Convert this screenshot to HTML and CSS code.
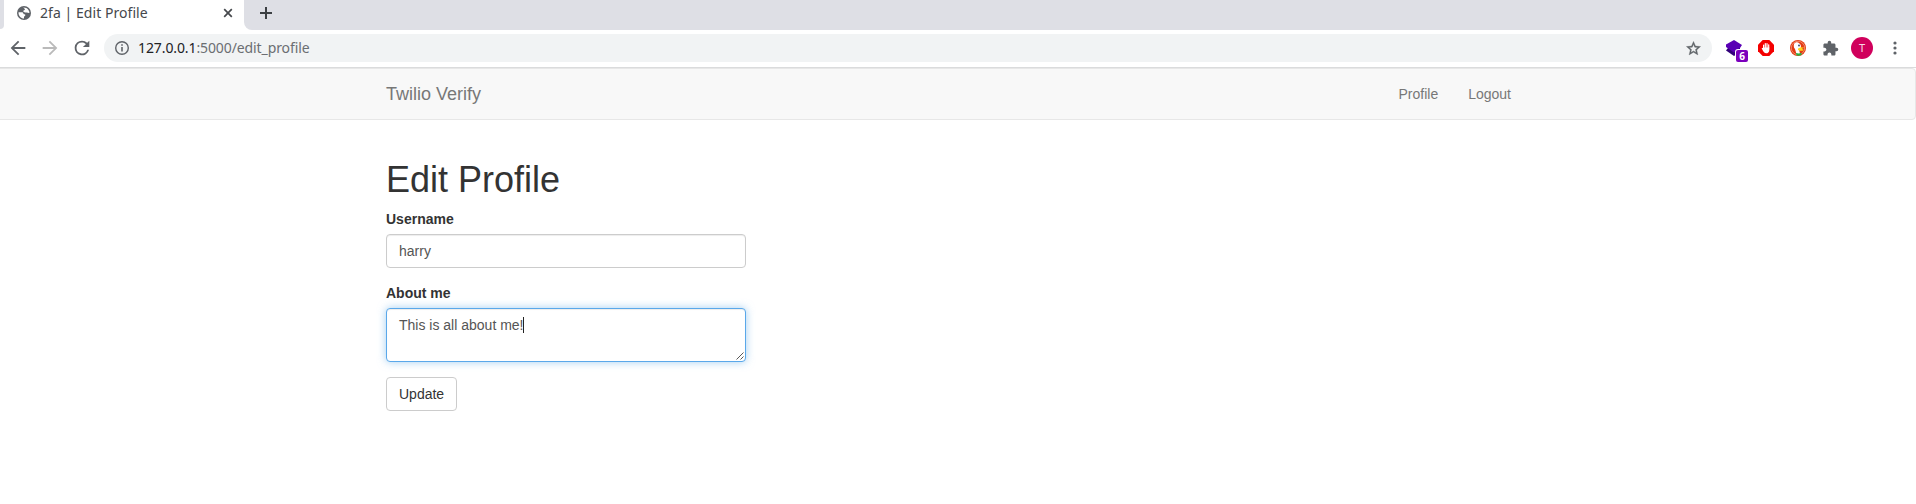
FILE: index.html
```html
<!DOCTYPE html>
<html lang="en">
<head>
<meta charset="utf-8">
<title>2fa | Edit Profile</title>
<link rel="stylesheet" href="styles.css">
</head>
<body>
<div class="browser">
  <div class="tabstrip">
    <div class="prev-tab"></div>
    <div class="tab">
      <svg class="favicon" width="16" height="16" viewBox="0 0 16 16"><circle cx="8" cy="8" r="7" fill="#5f6368"/><path d="M2.500 7.200h3.200c1 0 1.500.5 1.700 1.300.2.700.8.900 1.800.9.300 1-.1 1.800-1.200 2.100V13.500C5 13.300 2.300 11 2.500 7.200zM7.300 2.500c2-.1 4 .8 5 2.300.7 1 1.200 1.900 1.200 3-1.100.3-1.500-.3-2.600-.4-1.200-.1-2 .3-3.100-.4-.8-.6-.6-1.500.3-1.700.9-.2.900-.8.700-1.200z" fill="#fff"/></svg>
      <span class="tab-title">2fa | Edit Profile</span>
      <svg class="tab-close" width="10" height="10" viewBox="0 0 10 10"><path d="M1.200 1.200l7.600 7.600M8.800 1.200L1.200 8.800" stroke="#45484c" stroke-width="1.700"/></svg>
    </div>
    <div class="tab-rest">
      <svg width="14" height="14" viewBox="0 0 14 14"><path d="M7 1v12M1 7h12" stroke="#3c4043" stroke-width="2"/></svg>
    </div>
  </div>
  <div class="toolbar">
    <div class="slot"><svg width="22" height="22" viewBox="0 0 24 24"><path fill="#5f6368" d="M20 11H7.830l5.590-5.590L12 4l-8 8 8 8 1.410-1.410L7.830 13H20z"/></svg></div>
    <div class="slot"><svg width="22" height="22" viewBox="0 0 24 24"><path fill="#bababa" d="M12 4l-1.410 1.410L16.170 11H4v2h12.170l-5.580 5.590L12 20l8-8z"/></svg></div>
    <div class="slot"><svg width="22" height="22" viewBox="0 0 24 24"><path fill="#5f6368" d="M17.650 6.350A7.960 7.960 0 0 0 12 4a8 8 0 1 0 7.730 10h-2.080A6 6 0 1 1 12 6c1.660 0 3.140.69 4.220 1.780L13 11h7V4z"/></svg></div>
    <div class="omnibox">
      <svg width="16" height="16" viewBox="0 0 16 16"><circle cx="8" cy="8" r="6.300" fill="none" stroke="#5f6368" stroke-width="1.400"/><path d="M7.200 7h1.600v4.500H7.200zM7.200 4.300h1.600v1.500H7.200z" fill="#5f6368"/></svg>
      <span class="url"><span class="host">127.0.0.1</span>:5000/edit_profile</span>
      <svg class="star" width="17" height="17" viewBox="0 0 24 24"><path fill="#5f6368" stroke="#5f6368" stroke-width=".5" d="M22 9.240l-7.190-.62L12 2 9.190 8.630 2 9.240l5.460 4.730L5.820 21 12 17.270 18.180 21l-1.630-7.030zM12 15.400l-3.760 2.270 1-4.280-3.320-2.880 4.380-.38L12 6.100l1.710 4.040 4.380.38-3.320 2.880 1 4.280z"/></svg>
    </div>
    <div class="slot slot-badge">
      <svg width="16" height="16" viewBox="0 0 16 16"><path fill="#32007a" d="M2 8L0 10.500 8 16l6-4V7z"/><path fill="#5a00b5" d="M8 0l8 5-2 3-6 4.500L0 7V4.500z"/></svg>
      <span class="badge">6</span>
    </div>
    <div class="slot"><svg width="16" height="16" viewBox="0 0 16 16"><path d="M4.700 0h6.600L16 4.700v6.600L11.300 16H4.700L0 11.300V4.700z" fill="#f40000"/><path d="M5.600 9V5M7.300 8V3.500M9 8V3.500M10.700 8V4.800" stroke="#fff" stroke-width="1.200" stroke-linecap="round"/><path d="M3.600 8.300l1.400-.5 1 .2V7.500h5.300c.4 3.300-.4 5.800-2.800 5.800-2.300 0-3.400-2-4.900-5z" fill="#fff"/></svg></div>
    <div class="slot"><svg width="16" height="16" viewBox="0 0 16 16"><circle cx="8" cy="8" r="8" fill="#e33b12"/><circle cx="8" cy="8" r="6.700" fill="none" stroke="#f8a68c" stroke-width=".7"/><path d="M4 4c1.300-2.200 4-2 5.200-.8 1.800 1.300 2 3.200 1.600 5.200L9.200 10.500l1.200 4.300H6.700L5 9C3.900 8 3.500 6 4 4z" fill="#fff"/><circle cx="9" cy="5.500" r=".9" fill="#24406e"/><path d="M8 8.500l2.800-1.200 3.700.4-2.800 1.100 2.200 1.200c-1.700 1.200-4.700 1-5.900 0z" fill="#ffd51c"/><path d="M6 13l2.800.5 2.700-.8v2.400c-1.500.7-3.800.7-5.100.2z" fill="#28b040"/></svg></div>
    <div class="slot"><svg width="17" height="17" viewBox="0 0 24 24"><path fill="#5f6368" d="M20.500 11H19V7c0-1.100-.9-2-2-2h-4V3.500a2.500 2.500 0 0 0-5 0V5H4c-1.100 0-1.990.9-1.990 2v3.800H3.500c1.490 0 2.700 1.210 2.700 2.700s-1.210 2.700-2.700 2.700H2V20c0 1.100.9 2 2 2h3.800v-1.500c0-1.490 1.210-2.700 2.700-2.700s2.700 1.210 2.700 2.700V22H17c1.100 0 2-.9 2-2v-4h1.500a2.500 2.500 0 0 0 0-5z"/></svg></div>
    <div class="slot"><span class="avatar">T</span></div>
    <div class="slot slot-menu"><svg width="4" height="14" viewBox="0 0 4 14"><g fill="#5f6368"><circle cx="2" cy="2" r="1.600"/><circle cx="2" cy="7" r="1.600"/><circle cx="2" cy="12" r="1.600"/></g></svg></div>
  </div>
</div>
<div class="page">
  <nav class="navbar">
    <div class="container nav-inner">
      <a class="brand">Twilio Verify</a>
      <div class="nav-links"><a>Profile</a><a>Logout</a></div>
    </div>
  </nav>
  <main class="container">
    <h1>Edit Profile</h1>
    <form class="form">
      <div class="form-group">
        <label for="username">Username</label>
        <input id="username" class="form-control" type="text" value="harry">
      </div>
      <div class="form-group">
        <label>About me</label>
        <div class="form-control about">This is all about me!<span class="caret"></span>
          <svg class="grip" width="8" height="8" viewBox="0 0 8 8"><path d="M.5 7.500l7-7M4.500 7.500l3-3" stroke="#444" stroke-width=".9"/></svg>
        </div>
      </div>
      <button class="btn" type="button">Update</button>
    </form>
  </main>
</div>
</body>
</html>
```
FILE: styles.css
```css
* { box-sizing: border-box; }
body {
  margin: 0;
  height: 504px;
  overflow: hidden;
  background: #fff;
  font: 14px/20px "Liberation Sans", Arial, sans-serif;
  color: #333;
}
svg { display: block; flex: none; }

/* Browser chrome */
.browser {
  height: 68px;
  border-bottom: 1px solid #dadbdc;
  font-family: "Noto Sans", sans-serif;
}
.tabstrip { display: flex; height: 30px; background: #fff; }
.prev-tab { width: 4px; height: 29px; background: #dedfe5; border-bottom-right-radius: 4px; }
.tab { width: 240px; display: flex; align-items: center; padding: 0 11px 4px 12px; }
.tab-title {
  margin-left: 8px;
  font-size: 14px;
  letter-spacing: .05px;
  line-height: 20px;
  color: #45484c;
  white-space: nowrap;
}
.tab-close { margin-left: auto; }
.tab-rest {
  flex: 1;
  background: #dedfe5;
  border-bottom-left-radius: 8px;
  padding: 6px 0 0 15px;
}
.toolbar { display: flex; align-items: center; height: 37px; padding: 0 6px 1px 2px; }
.slot { width: 32px; height: 28px; display: flex; align-items: center; justify-content: center; flex: none; }
.slot-menu { padding-left: 1px; }
.omnibox {
  flex: 1;
  height: 28px;
  margin: 0 6px;
  padding: 0 10px;
  border-radius: 14px;
  background: #f1f3f4;
  display: flex;
  align-items: center;
}
.url { margin-left: 8px; font-size: 14px; letter-spacing: -.1px; color: #6b6e72; white-space: nowrap; }
.host { color: #202124; }
.star { margin-left: auto; }
.slot-badge { position: relative; }
.badge {
  position: absolute;
  left: 18px;
  top: 16px;
  width: 12px;
  height: 12px;
  border-radius: 2px;
  background: #7b00bd;
  box-shadow: 0 0 0 1px #fff;
  color: #fff;
  font: bold 10px/12px "Noto Sans", sans-serif;
  text-align: center;
}
.avatar {
  width: 22px;
  height: 22px;
  border-radius: 50%;
  background: #d0005c;
  color: #f8d5e4;
  font-size: 11px;
  line-height: 22px;
  text-align: center;
}

/* Page */
.page { width: 1920px; margin-left: -4px; }
.container { width: 1170px; margin: 0 auto; padding: 0 15px; }
.navbar {
  height: 52px;
  margin-bottom: 20px;
  border: 1px solid #e7e7e7;
  border-radius: 4px;
  background: #f8f8f8;
}
.nav-inner { display: flex; justify-content: space-between; height: 50px; align-items: center; color: #777; }
.brand { font-size: 18px; }
.nav-links { display: flex; }
.nav-links a { padding: 0 15px; }
h1 { margin: 20px 0 9px; font-size: 36px; line-height: 40px; font-weight: 500; }
.page > main { display: flow-root; }
.form { width: 360px; }
.form-group { margin-bottom: 15px; }
label { display: block; margin-bottom: 5px; font-weight: 700; }
.form-control {
  display: block;
  width: 100%;
  height: 34px;
  padding: 6px 12px;
  border: 1px solid #ccc;
  border-radius: 4px;
  background: #fff;
  box-shadow: inset 0 1px 1px rgba(0, 0, 0, .075);
  color: #555;
  font: inherit;
}
.about {
  position: relative;
  height: 54px;
  border-color: #5aa8ea;
  box-shadow: inset 0 1px 1px rgba(0, 0, 0, .075), 0 0 8px rgba(102, 175, 233, .6);
}
.caret { display: inline-block; width: 1px; height: 16px; margin-left: -1px; background: #222; vertical-align: -3px; }
.grip { position: absolute; right: 1px; bottom: 1px; }
.btn {
  display: block;
  height: 34px;
  padding: 6px 12px;
  border: 1px solid #ccc;
  border-radius: 4px;
  background: #fff;
  color: #333;
  font: inherit;
}
```
